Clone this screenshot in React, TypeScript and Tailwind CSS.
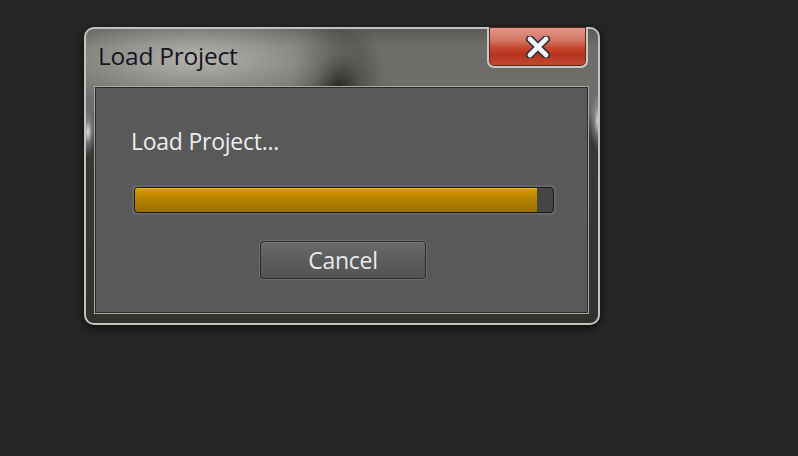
import React from 'react';

const progress = 96.2;

function CloseGlyph() {
  return (
    <svg width="26" height="22" viewBox="0 0 26 22">
      <path d="M5 3 L21 19 M21 3 L5 19" stroke="#2b3142" strokeWidth="8" strokeLinecap="round" fill="none" />
      <path d="M5 3 L21 19 M21 3 L5 19" stroke="#f4f6fa" strokeWidth="4.6" strokeLinecap="round" fill="none" />
    </svg>
  );
}

export default function App() {
  return (
    <div className="w-[798px] h-[456px] bg-[#262626] overflow-hidden pt-[27px] pl-[84px]" style={{ fontFamily: '"Open Sans", "Noto Sans", sans-serif' }}>
      <div className="relative w-[516px] h-[298px] rounded-[10px] border-2 border-[#c2c2c0] pt-[57px] pl-[8px] pr-[9px] pb-[9px] shadow-[0_3px_10px_rgba(0,0,0,0.7)] bg-[radial-gradient(ellipse_170px_50px_at_110px_30px,#b4b3ae,transparent),radial-gradient(ellipse_48px_70px_at_252px_56px,rgba(38,36,33,0.95),rgba(50,48,45,0.45)_45%,transparent),radial-gradient(ellipse_8px_24px_at_2px_103px,rgba(240,240,240,0.9),rgba(200,200,200,0.35)_50%,transparent),radial-gradient(ellipse_8px_30px_at_512px_92px,rgba(235,235,235,0.85),rgba(200,200,200,0.3)_50%,transparent),linear-gradient(to_bottom,#5c5b57_0px,#6e6d69_18px,#6e6d69_80px,#4a4844_100px,#3a3833_112px,#33312c_100%)]">
        {/* title */}
        <div className="absolute left-[12px] top-[12px] text-[24.5px] leading-[30px] text-[#15151f] tracking-[-0.25px]">Load Project</div>

        {/* close button */}
        <div className="absolute left-[401px] top-[-2px] w-[101px] h-[41px] rounded-b-[7px] border-2 border-t-0 border-[#c8c8c6] shadow-[inset_0_0_0_1px_#5a2a22] bg-[linear-gradient(to_bottom,#e3988a_0%,#d47564_35%,#c4442c_55%,#b83420_70%,#c24a32_100%)] flex items-center justify-center">
          <CloseGlyph />
        </div>

        {/* panel */}
        <div className="w-full h-full border border-[#a8a8a6] shadow-[inset_0_0_0_1px_#2a2a2a] bg-[#595959] pt-[40px] px-[37px]">
          <div className="-ml-[1px] text-[23px] leading-[28px] text-[#ececf0] tracking-[-0.25px]">Load Project...</div>

          <div className="mt-[30px] w-[424px] h-[30px] rounded-[5px] bg-[#666666] p-[2px]">
            <div className="w-full h-full rounded-[4px] border border-[#1c1c1c] bg-[#454545] overflow-hidden">
              <div className="h-full rounded-l-[3px] bg-[linear-gradient(to_bottom,#d89a00,#b48200_50%,#9a6e00)] shadow-[inset_0_1px_0_#f0b420]" style={{ width: `${progress}%` }} />
            </div>
          </div>

          <div className="mt-[26px] ml-[128px] w-[166px] h-[38px] rounded-[4px] border border-[#2c2c2c] shadow-[0_0_0_1px_#6c6c6c,inset_0_1px_0_#7a7a7a] bg-[linear-gradient(to_bottom,#6a6a6a,#5c5c5c_50%,#545454)] flex items-center justify-center text-[23px] leading-[28px] text-[#e8e8ec] tracking-[-0.25px]">
            Cancel
          </div>
        </div>
      </div>
    </div>
  );
}
